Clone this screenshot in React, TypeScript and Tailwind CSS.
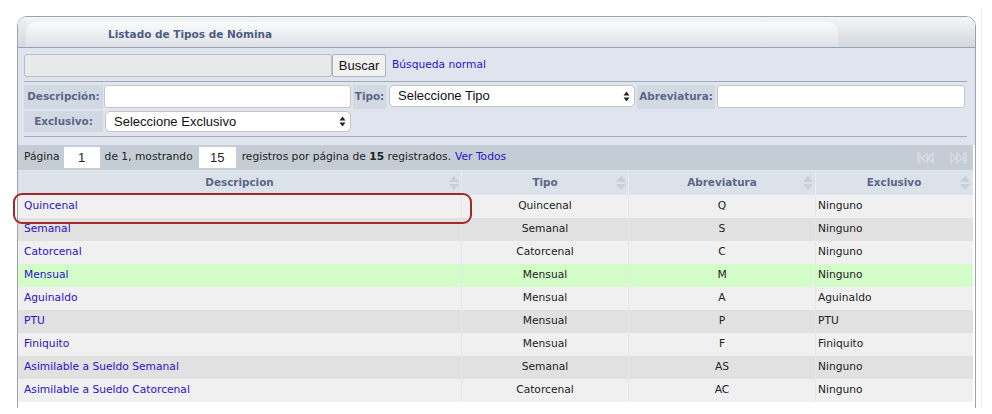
import React from "react";

const rows = [
  { desc: "Quincenal", tipo: "Quincenal", abrev: "Q", excl: "Ninguno" },
  { desc: "Semanal", tipo: "Semanal", abrev: "S", excl: "Ninguno" },
  { desc: "Catorcenal", tipo: "Catorcenal", abrev: "C", excl: "Ninguno" },
  { desc: "Mensual", tipo: "Mensual", abrev: "M", excl: "Ninguno", active: true },
  { desc: "Aguinaldo", tipo: "Mensual", abrev: "A", excl: "Aguinaldo" },
  { desc: "PTU", tipo: "Mensual", abrev: "P", excl: "PTU" },
  { desc: "Finiquito", tipo: "Mensual", abrev: "F", excl: "Finiquito" },
  { desc: "Asimilable a Sueldo Semanal", tipo: "Semanal", abrev: "AS", excl: "Ninguno" },
  { desc: "Asimilable a Sueldo Catorcenal", tipo: "Catorcenal", abrev: "AC", excl: "Ninguno" },
];

const verdana = "font-['DejaVu_Sans',Verdana,sans-serif]";
const helv = "font-['Liberation_Sans',Arial,sans-serif]";

function SortArrows() {
  return (
    <svg width="12" height="16" viewBox="0 0 12 16" className="shrink-0">
      <path d="M6 1 L11 7 H1 Z" fill="#c9cfd6" />
      <path d="M1 9 H11 L6 15 Z" fill="#c9cfd6" />
    </svg>
  );
}

function SelectArrows() {
  return (
    <svg width="7" height="11" viewBox="0 0 7 11" className="shrink-0">
      <path d="M3.5 0.5 L6.5 4.5 H0.5 Z" fill="#222" />
      <path d="M0.5 6.5 H6.5 L3.5 10.5 Z" fill="#222" />
    </svg>
  );
}

function PagerIcon({ last }: { last?: boolean }) {
  return (
    <svg
      width="18"
      height="12"
      viewBox="0 0 18 12"
      style={{ transform: last ? "scaleX(-1)" : undefined }}
    >
      <g fill="none" stroke="#d9dee4" strokeWidth="1.3">
        <rect x="1" y="1" width="2" height="10" />
        <path d="M10 1.2 L4.5 6 L10 10.8 Z" />
        <path d="M16 1.2 L10.5 6 L16 10.8 Z" />
      </g>
    </svg>
  );
}

function Label({ children, w }: { children: React.ReactNode; w: string }) {
  return (
    <div
      className={`${w} flex shrink-0 items-center justify-center bg-[#d3d9e3] text-[10.4px] font-bold text-[#5a6789]`}
    >
      {children}
    </div>
  );
}

function FakeSelect({ text, w, h }: { text: string; w: string; h: string }) {
  return (
    <div
      className={`${w} ${h} ${helv} flex shrink-0 items-center justify-between rounded-[5px] border border-[#c4c4c4] bg-white pl-[8px] pr-[4px] text-[13px] text-[#111]`}
    >
      <span>{text}</span>
      <SelectArrows />
    </div>
  );
}

export default function App() {
  return (
    <div className={`relative h-[414px] w-[992px] overflow-hidden bg-white ${verdana}`}>
      <div className="flex">
        <div className="ml-[17px] mt-[16px] w-[959px] rounded-t-[10px] border-x border-t border-[#9aa3ad]">
          {/* Header */}
          <div className="flex h-[31px] rounded-t-[9px] border-b border-[#9aa3ad] bg-gradient-to-b from-[#f3f4f6] to-[#d7dbe0]">
            <div className="w-[8px] rounded-tl-[9px] bg-gradient-to-b from-[#eef0f2] to-[#d5d9de]" />
            <div className="mt-[5px] flex w-[812px] items-center rounded-t-[10px] bg-gradient-to-b from-[#fbfbfc] to-[#dde1e6] pl-[82px] text-[10.5px] font-bold text-[#4f5d82]">
              Listado de Tipos de Nómina
            </div>
            <div className="flex-1 rounded-tr-[9px] bg-gradient-to-b from-[#f5f6f7] to-[#d3d8de]" />
          </div>

          {/* Search / filters */}
          <div className="bg-[#dfe4ee] pl-[6px] pr-[8px] pt-[6px] pb-[8px]">
            <div className="flex h-[23px] items-center">
              <div className="h-[23px] w-[308px] rounded-[3px] border border-[#b9bcc1] bg-[#e8e9eb]" />
              <div
                className={`${helv} flex h-[23px] w-[54px] items-center justify-center rounded-[2px] border border-[#b0b3b7] bg-[#f1f1f1] text-[13px] text-[#111]`}
              >
                Buscar
              </div>
              <span className="ml-[6px] text-[10.7px] text-[#2a12c4]">Búsqueda normal</span>
            </div>
            <div className="mt-[4px] border-t border-[#a3abb7]" />
            <div className="mt-[3px] flex h-[24px] items-stretch">
              <Label w="w-[79px]">Descripción:</Label>
              <div className="ml-[1px] h-[23px] w-[247px] rounded-[3px] border border-[#c6c6c6] bg-white" />
              <Label w="ml-[2px] w-[33px]">Tipo:</Label>
              <div className="ml-[3px]">
                <FakeSelect text="Seleccione Tipo" w="w-[246px]" h="h-[22px]" />
              </div>
              <Label w="ml-[2px] w-[78px]">Abreviatura:</Label>
              <div className="ml-[2px] h-[23px] w-[248px] rounded-[3px] border border-[#c6c6c6] bg-white" />
            </div>
            <div className="mt-[2px] flex h-[21px] items-stretch">
              <Label w="w-[79px]">Exclusivo:</Label>
              <div className="ml-[2px]">
                <FakeSelect text="Seleccione Exclusivo" w="w-[246px]" h="h-[21px]" />
              </div>
            </div>
            <div className="mt-[4px] border-t border-[#a3abb7]" />
          </div>

          {/* Pager */}
          <div className="mr-[2px] flex h-[25px] items-center bg-[#c4cdd6] pl-[6px] pr-[6px] text-[10.7px] text-[#222]">
            <span>Página</span>
            <div className={`${helv} ml-[4px] mr-[5px] flex h-[21px] w-[36px] items-center justify-center bg-white text-[13px]`}>1</div>
            <span>de 1, mostrando</span>
            <div className={`${helv} ml-[6px] mr-[6px] flex h-[21px] w-[37px] items-center justify-center bg-white text-[13px]`}>15</div>
            <span>
              registros por página de <b>15</b> registrados.
            </span>
            <span className="ml-[4px] text-[#2a12c4]">Ver Todos</span>
            <div className="ml-auto flex items-center gap-[14px]">
              <PagerIcon />
              <PagerIcon last />
            </div>
          </div>

          {/* Table */}
          <div className="mr-[2px] text-[10.7px]">
            <div className="grid h-[25px] grid-cols-[443px_167px_187px_157px] border-t border-[#e3e7ec] bg-[#dce2ea] text-[10.4px] font-bold text-[#5a6789]">
              {["Descripcion", "Tipo", "Abreviatura", "Exclusivo"].map((h, i) => (
                <div
                  key={h}
                  className={`relative flex items-center justify-center ${i > 0 ? "border-l border-[#e8ecf1]" : ""}`}
                >
                  {h}
                  <div className="absolute right-[1px] top-[4px]">
                    <SortArrows />
                  </div>
                </div>
              ))}
            </div>
            {rows.map((r, i) => (
              <div
                key={r.desc}
                className={`grid h-[23px] grid-cols-[443px_167px_187px_157px] items-center ${
                  r.active ? "bg-[#d3fcc8]" : i % 2 === 0 ? "bg-[#f0f0f0]" : "bg-[#e1e1e1]"
                }`}
              >
                <div className="pl-[6px] text-[#2a12c4]">{r.desc}</div>
                <div className="flex h-full items-center justify-center border-l border-[#e7e7e7] text-[#222]">{r.tipo}</div>
                <div className="flex h-full items-center justify-center border-l border-[#e7e7e7] text-[#222]">{r.abrev}</div>
                <div className="flex h-full items-center border-l border-[#e7e7e7] pl-[2px] text-[#222]">{r.excl}</div>
              </div>
            ))}
          </div>
        </div>
        <div className="ml-[5px] mt-[8px] h-[400px] w-px bg-[#ececec]" />
      </div>

      {/* highlight annotation */}
      <div className="absolute left-[13px] top-[193px] h-[31px] w-[459px] rounded-[9px] border-[2.5px] border-[#a3282a]" />
    </div>
  );
}
